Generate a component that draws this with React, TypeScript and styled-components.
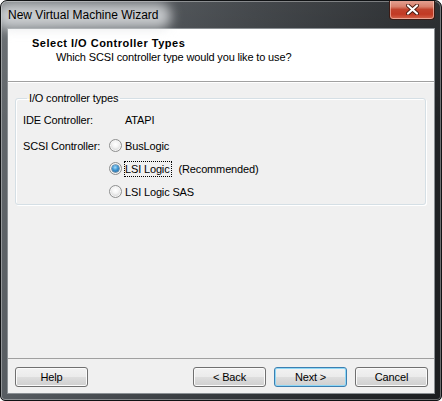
import React from "react";
import styled, { createGlobalStyle } from "styled-components";

const Global = createGlobalStyle`
  html, body { margin: 0; padding: 0; background: #ffffff; }
  body { font-family: "Liberation Sans", Arial, sans-serif; font-size: 11px; color: #000; letter-spacing: -0.15px; }
  * { box-sizing: border-box; }
`;

const Window = styled.div`
  width: 442px;
  height: 401px;
  border: 1px solid #101214;
  border-radius: 7px 7px 5px 5px;
  background:
    linear-gradient(180deg, rgba(255,255,255,0.06) 0%, rgba(255,255,255,0) 30%),
    linear-gradient(100deg, #666b6f 0%, #50555a 22%, #3a3e42 50%, #25282b 80%, #1c1e20 100%);
  box-shadow: inset 0 0 0 1px rgba(255, 255, 255, 0.35);
  display: flex;
  flex-direction: column;
  padding: 0 6px 6px 6px;
  overflow: hidden;
`;

const TitleBar = styled.div`
  height: 27px;
  display: flex;
  align-items: flex-start;
  position: relative;
`;

const TitleText = styled.div`
  position: relative;
  margin: 7px 0 0 1px;
  font-family: "Liberation Sans", Arial, sans-serif;
  font-size: 12px;
  line-height: 15px;
  letter-spacing: 0;
  color: #000;
  white-space: nowrap;
  &::before {
    content: "";
    position: absolute;
    left: -12px;
    right: -12px;
    top: -5px;
    bottom: -6px;
    border-radius: 12px;
    background: rgba(225, 228, 230, 0.8);
    filter: blur(6px);
    z-index: 0;
  }
  span { position: relative; z-index: 1; }
`;

const CloseButton = styled.div`
  margin-left: auto;
  margin-top: -1px;
  width: 46px;
  height: 20px;
  border: 1px solid #3a1a14;
  border-top: none;
  border-radius: 0 0 4px 4px;
  background: linear-gradient(180deg, #e6a597 0%, #d8806c 35%, #c2432d 50%, #c23a24 75%, #d4654c 100%);
  box-shadow: inset 0 0 0 1px rgba(255, 220, 210, 0.55);
  display: flex;
  align-items: center;
  justify-content: center;
`;

const Client = styled.div`
  flex: 1;
  display: flex;
  flex-direction: column;
  border: 1px solid #8b9094;
  background: #f0f0f0;
`;

const Header = styled.div`
  height: 53px;
  background: #ffffff;
  border-bottom: 1px solid #a0a0a0;
  padding: 7px 0 0 24px;
  display: flex;
  flex-direction: column;
`;

const HeaderTitle = styled.div`
  font-weight: bold;
  font-size: 11px;
  line-height: 14px;
  letter-spacing: 0.5px;
`;

const HeaderSub = styled.div`
  font-size: 11px;
  line-height: 14px;
  padding-left: 24px;
`;

const Body = styled.div`
  flex: 1;
  border-top: 1px solid #ffffff;
  padding: 9px 8px 0 7px;
`;

const Group = styled.fieldset`
  margin: 0;
  padding: 3px 0 1px 7px;
  border: 1px solid #d5dfe5;
  border-radius: 3px;
  box-shadow: inset 1px 1px 0 #ffffff, 1px 1px 0 #ffffff;
`;

const Legend = styled.legend`
  margin-left: 4px;
  padding: 0 2px;
  font-size: 11px;
  line-height: 13px;
`;

const Grid = styled.div`
  display: grid;
  grid-template-columns: 86px 1fr;
  grid-template-rows: 23px auto;
  row-gap: 3px;
`;

const Label = styled.div`
  display: flex;
  align-items: center;
  align-self: start;
  height: 23px;
  line-height: 14px;
`;

const Value = styled.div<{ $indent?: boolean }>`
  display: flex;
  align-items: center;
  padding-left: ${(p) => (p.$indent ? "16px" : "0")};
  line-height: 14px;
`;

const RadioList = styled.div`
  display: grid;
  grid-auto-rows: 23px;
`;

const RadioRow = styled.label`
  display: flex;
  align-items: center;
  gap: 2px;
`;

const RadioInput = styled.input`
  appearance: none;
  margin: 0;
  width: 13px;
  height: 13px;
  border-radius: 50%;
  border: 1px solid #8e8f8f;
  background: radial-gradient(circle at 50% 40%, #ffffff 0%, #f4f4f4 35%, #d8d8d8 70%, #c9c9c9 100%);
  box-shadow: inset 0 0 0 1px #f6f6f6;
  position: relative;
  flex: none;
  &:checked::after {
    content: "";
    position: absolute;
    left: 2px;
    top: 2px;
    width: 7px;
    height: 7px;
    border-radius: 50%;
    background: radial-gradient(circle at 45% 35%, #a6dcfb 0%, #3f96d2 45%, #145a93 100%);
    box-shadow: 0 0 0 0.5px #1b4f78;
  }
`;

const RadioText = styled.span<{ $focused?: boolean }>`
  border: 1px dotted ${(p) => (p.$focused ? "#000" : "transparent")};
  line-height: 14px;
  padding: 0 1px 0 0;
`;

const Note = styled.span`
  margin-left: 5px;
  line-height: 14px;
`;

const Footer = styled.div`
  border-top: 1px solid #a0a0a0;
  padding: 8px 6px 6px 7px;
  display: flex;
  gap: 8px;
`;

const Spacer = styled.div`
  flex: 1;
`;

const Button = styled.button<{ $default?: boolean }>`
  width: 73px;
  height: 20px;
  margin: 0;
  padding: 0;
  font-family: "Liberation Sans", Arial, sans-serif;
  font-size: 11px;
  letter-spacing: -0.15px;
  color: #000;
  border: 1px solid ${(p) => (p.$default ? "#3c7fb1" : "#707070")};
  border-radius: 3px;
  background: linear-gradient(180deg, #f2f2f2 0%, #ebebeb 48%, #dddddd 52%, #cfcfcf 100%);
  box-shadow: inset 0 0 0 1px ${(p) => (p.$default ? "#8fd8f6" : "#fbfbfb")};
`;

const options = ["BusLogic", "LSI Logic", "LSI Logic SAS"];

export default function App() {
  return (
    <>
      <Global />
      <Window>
        <TitleBar>
          <TitleText>
            <span>New Virtual Machine Wizard</span>
          </TitleText>
          <CloseButton>
            <svg width="13" height="11" viewBox="0 0 13 11">
              <path d="M2 1.5 L11 9.5 M11 1.5 L2 9.5" stroke="#4a1c12" strokeWidth="4" strokeLinecap="round" />
              <path d="M2 1.5 L11 9.5 M11 1.5 L2 9.5" stroke="#ffffff" strokeWidth="2.2" strokeLinecap="round" />
            </svg>
          </CloseButton>
        </TitleBar>
        <Client>
          <Header>
            <HeaderTitle>Select I/O Controller Types</HeaderTitle>
            <HeaderSub>Which SCSI controller type would you like to use?</HeaderSub>
          </Header>
          <Body>
            <Group>
              <Legend>I/O controller types</Legend>
              <Grid>
                <Label>IDE Controller:</Label>
                <Value $indent>ATAPI</Value>
                <Label>SCSI Controller:</Label>
                <RadioList>
                  {options.map((s) => (
                    <RadioRow key={s}>
                      <RadioInput type="radio" name="scsi" defaultChecked={s === "LSI Logic"} />
                      <RadioText $focused={s === "LSI Logic"}>{s}</RadioText>
                      {s === "LSI Logic" && <Note>(Recommended)</Note>}
                    </RadioRow>
                  ))}
                </RadioList>
              </Grid>
            </Group>
          </Body>
          <Footer>
            <Button>Help</Button>
            <Spacer />
            <Button>&lt; Back</Button>
            <Button $default>Next &gt;</Button>
            <Button>Cancel</Button>
          </Footer>
        </Client>
      </Window>
    </>
  );
}
